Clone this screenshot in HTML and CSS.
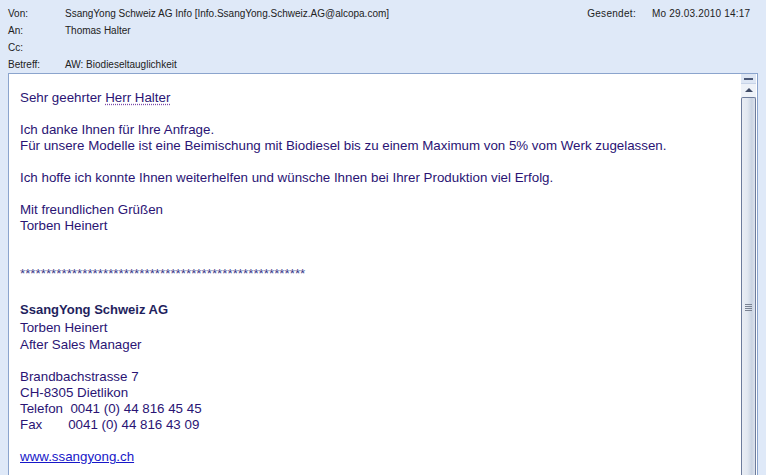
FILE: index.html
```html
<!DOCTYPE html>
<html>
<head>
<meta charset="utf-8">
<link rel="stylesheet" href="styles.css">
</head>
<body>
<div class="header">
  <div class="hrow">
    <span class="label">Von:</span>
    <span class="value grow">SsangYong Schweiz AG Info [Info.SsangYong.Schweiz.AG@alcopa.com]</span>
    <span class="label sent">Gesendet:</span>
    <span class="value date">Mo 29.03.2010 14:17</span>
  </div>
  <div class="hrow"><span class="label">An:</span><span class="value">Thomas Halter</span></div>
  <div class="hrow"><span class="label">Cc:</span><span class="value"></span></div>
  <div class="hrow"><span class="label">Betreff:</span><span class="value">AW: Biodieseltauglichkeit</span></div>
</div>
<div class="pane">
  <div class="content">
    <p>Sehr geehrter <span class="smart">Herr Halter</span></p>
    <p class="blank">&nbsp;</p>
    <p>Ich danke Ihnen für Ihre Anfrage.</p>
    <p>Für unsere Modelle ist eine Beimischung mit Biodiesel bis zu einem Maximum von 5% vom Werk zugelassen.</p>
    <p class="blank">&nbsp;</p>
    <p>Ich hoffe ich konnte Ihnen weiterhelfen und wünsche Ihnen bei Ihrer Produktion viel Erfolg.</p>
    <p class="blank">&nbsp;</p>
    <p>Mit freundlichen Grüßen</p>
    <p>Torben Heinert</p>
    <p class="blank">&nbsp;</p>
    <p class="blank">&nbsp;</p>
    <p class="stars">*******************************************************</p>
    <p class="blank">&nbsp;</p>
    <p class="company">SsangYong Schweiz AG</p>
    <p class="sig">Torben Heinert</p>
    <p class="sig">After Sales Manager</p>
    <p class="blank">&nbsp;</p>
    <p>Brandbachstrasse 7</p>
    <p>CH-8305 Dietlikon</p>
    <p>Telefon&nbsp; 0041 (0) 44 816 45 45</p>
    <p>Fax&nbsp;&nbsp;&nbsp;&nbsp;&nbsp;&nbsp;&nbsp;0041 (0) 44 816 43 09</p>
    <p class="blank">&nbsp;</p>
    <p><a href="#" class="link">www.ssangyong.ch</a></p>
  </div>
  <div class="scrollbar">
    <div class="split"><span class="dash"></span></div>
    <div class="up"><span class="arrow"></span></div>
    <div class="thumb"><span class="grip"></span></div>
  </div>
</div>
</body>
</html>
```
FILE: styles.css
```css
html, body {
  margin: 0;
  padding: 0;
  background: #dfe9f8;
  overflow: hidden;
}
body {
  width: 766px;
  height: 475px;
  font-family: "Liberation Sans", Arial, sans-serif;
}
.header {
  padding: 5px 0 0 8px;
  height: 67px;
  box-sizing: content-box;
  font-size: 10px;
  color: #222222;
}
.hrow {
  display: flex;
  height: 17px;
  line-height: 17px;
  white-space: nowrap;
}
.label {
  width: 57px;
  flex: none;
}
.value.grow {
  flex: 1;
}
.label.sent {
  width: auto;
  letter-spacing: 0.3px;
}
.date {
  width: 130px;
  padding-left: 16px;
  box-sizing: border-box;
  flex: none;
  letter-spacing: 0.2px;
}
.pane {
  margin: 1px 0 0 8px;
  width: 750px;
  height: 410px;
  border: 1px solid #8ba4cd;
  border-bottom: none;
  background: #ffffff;
  display: flex;
  box-sizing: border-box;
}
.content {
  flex: 1;
  padding: 16px 0 0 11px;
  font-family: "Liberation Sans", Arial, sans-serif;
  font-size: 13.33px;
  color: #2a1474;
}
.content p {
  margin: 0;
  height: 16px;
  line-height: 16px;
  white-space: nowrap;
}
.smart {
  text-decoration: underline dotted #7a4aa8;
  text-underline-offset: 2px;
}
.stars {
  color: #3a3a8a;
}
.content p.company {
  font-weight: bold;
  color: #1f1f5e;
  font-size: 13px;
  height: 20px;
  line-height: 24px;
}
.content p.sig {
  height: 17px;
  line-height: 20px;
}
.content p.sig + .blank {
  height: 17px;
}
.link {
  color: #1717c8;
  text-decoration: underline;
}
.scrollbar {
  width: 15px;
  margin-right: 1px;
  display: flex;
  flex-direction: column;
  background: #eef2f8;
}
.split {
  height: 9px;
  background: #dde6f4;
  border-bottom: 1px solid #c8d4e8;
  display: flex;
  align-items: center;
  justify-content: center;
}
.dash {
  display: block;
  width: 9px;
  height: 2px;
  background: #4a5877;
}
.up {
  height: 12px;
  display: flex;
  align-items: center;
  justify-content: center;
}
.arrow {
  width: 0;
  height: 0;
  border-left: 4px solid transparent;
  border-right: 4px solid transparent;
  border-bottom: 4px solid #3f4b66;
}
.thumb {
  flex: 1;
  margin: 1px 0 0 0;
  border: 1px solid #6d7c9c;
  border-bottom: none;
  border-radius: 2px 2px 0 0;
  background: linear-gradient(to right, #e9edf4 0%, #e2e8f1 40%, #c9d3e2 75%, #dde3ee 100%);
  position: relative;
}
.grip {
  position: absolute;
  left: 3px;
  top: 206px;
  width: 7px;
  height: 7px;
  background: repeating-linear-gradient(to bottom, #7a8292 0, #7a8292 1px, transparent 1px, transparent 2px);
}
```
